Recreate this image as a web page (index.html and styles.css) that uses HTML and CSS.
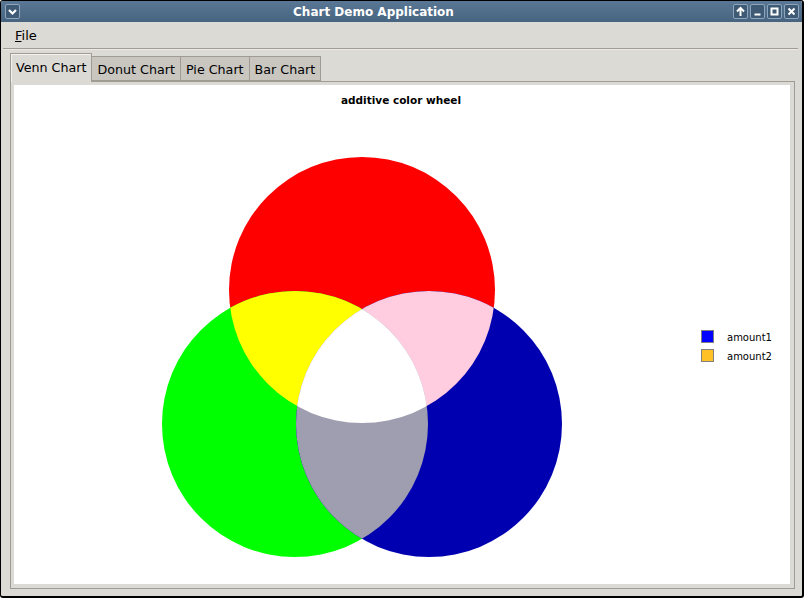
FILE: index.html
```html
<!DOCTYPE html>
<html>
<head>
<meta charset="utf-8">
<link rel="stylesheet" href="styles.css">
</head>
<body>
<div class="window">
  <div class="titlebar">
    <div class="tbtn menu-btn">
      <svg width="15" height="15" viewBox="0 0 15 15"><path d="M4 6 L7.5 9.5 L11 6" fill="none" stroke="#fff" stroke-width="2.2"/></svg>
    </div>
    <div class="title">Chart Demo Application</div>
    <div class="tbtns">
      <div class="tbtn"><svg width="15" height="15" viewBox="0 0 15 15"><path d="M7.5 4 V12 M4 7.5 L7.5 4 L11 7.5" fill="none" stroke="#fff" stroke-width="2"/></svg></div>
      <div class="tbtn"><svg width="15" height="15" viewBox="0 0 15 15"><path d="M4.5 10.5 H10.5" fill="none" stroke="#fff" stroke-width="2"/></svg></div>
      <div class="tbtn"><svg width="15" height="15" viewBox="0 0 15 15"><rect x="4.5" y="4.5" width="6" height="6" fill="none" stroke="#fff" stroke-width="2"/></svg></div>
      <div class="tbtn"><svg width="15" height="15" viewBox="0 0 15 15"><path d="M4.5 4.5 L10.5 10.5 M10.5 4.5 L4.5 10.5" fill="none" stroke="#fff" stroke-width="2"/></svg></div>
    </div>
  </div>
  <div class="menubar"><span class="menu-item"><span class="mn">F</span>ile</span></div>
  <div class="sep"></div>
  <div class="tabbar">
    <div class="tab active">Venn Chart</div>
    <div class="tab">Donut Chart</div>
    <div class="tab">Pie Chart</div>
    <div class="tab">Bar Chart</div>
  </div>
  <div class="pane">
    <div class="canvas">
      <svg class="chart" width="776" height="499" viewBox="0 0 776 499">
        <defs>
          <clipPath id="cr"><circle cx="348" cy="205" r="133"/></clipPath>
          <clipPath id="cg"><circle cx="281" cy="339" r="133"/></clipPath>
        </defs>
        <text class="ctitle" x="387" y="19" text-anchor="middle">additive color wheel</text>
        <circle cx="348" cy="205" r="133" fill="#ff0000"/>
        <circle cx="281" cy="339" r="133" fill="#00ff00"/>
        <circle cx="415" cy="339" r="133" fill="#0000b0"/>
        <circle cx="281" cy="339" r="133" fill="#ffff00" clip-path="url(#cr)"/>
        <circle cx="415" cy="339" r="133" fill="#ffcce0" clip-path="url(#cr)"/>
        <circle cx="415" cy="339" r="133" fill="#9e9eb0" clip-path="url(#cg)"/>
        <g clip-path="url(#cr)">
          <circle cx="415" cy="339" r="133" fill="#ffffff" clip-path="url(#cg)"/>
        </g>
        <rect x="687.5" y="245.5" width="12" height="12" fill="#0000ff" stroke="#808080"/>
        <rect x="687.5" y="264.5" width="12" height="12" fill="#ffc125" stroke="#808080"/>
        <text class="legend" x="713" y="255.5">amount1</text>
        <text class="legend" x="713" y="274.5">amount2</text>
      </svg>
    </div>
  </div>
</div>
</body>
</html>
```
FILE: styles.css
```css
html, body {
  margin: 0;
  padding: 0;
  background: #ffffff;
}
.window {
  width: 804px;
  height: 598px;
  box-sizing: border-box;
  border: 1px solid #000;
  border-right-width: 2px;
  border-bottom-width: 2px;
  border-radius: 3px;
  background: #dcdad5;
  overflow: hidden;
  font-family: "DejaVu Sans", sans-serif;
  display: flex;
  flex-direction: column;
}
.titlebar {
  height: 21px;
  flex: none;
  display: flex;
  align-items: center;
  padding: 0 3px 0 4px;
  background: linear-gradient(#5a7895, #46637f);
}
.title {
  flex: 1;
  text-align: center;
  color: #ffffff;
  font-weight: bold;
  font-size: 12px;
  padding-right: 6px;
}
.tbtns {
  display: flex;
  gap: 2px;
}
.tbtn {
  width: 15px;
  height: 15px;
  box-sizing: border-box;
  border: 1px solid #8ea6bd;
  border-radius: 2px;
  background: #3e5a75;
  display: flex;
  align-items: center;
  justify-content: center;
}
.tbtn svg {
  display: block;
  flex: none;
}
.menubar {
  height: 25px;
  box-sizing: border-box;
  padding-top: 2px;
  flex: none;
  display: flex;
  align-items: center;
  padding-left: 14px;
  font-size: 13px;
  color: #000;
}
.mn {
  text-decoration: underline;
}
.sep {
  height: 1px;
  flex: none;
  margin: 1px 4px 0 2px;
  background: #a09c94;
  border-bottom: 1px solid #ece9e4;
}
.tabbar {
  flex: none;
  display: flex;
  align-items: flex-end;
  height: 28px;
  margin-top: 3px;
  padding-left: 9px;
  position: relative;
  z-index: 1;
  font-size: 12.7px;
  color: #000;
}
.tab {
  height: 25px;
  box-sizing: border-box;
  padding: 1px 5px 0 5px;
  display: flex;
  align-items: center;
  background: #c9c6c0;
  border: 1px solid #a09c94;
  border-left: none;
  border-bottom: 1px solid #a09c94;
}
.tab.active {
  height: 29px;
  margin-bottom: -1px;
  background: #dcdad5;
  border-left: 1px solid #a09c94;
  border-bottom: none;
  box-shadow: inset 1px 1px 0 #f3f2ef;
  padding-top: 0;
  padding-bottom: 1px;
}
.pane {
  flex: none;
  height: 508px;
  box-sizing: border-box;
  margin: 0 7px 0 9px;
  border: 1px solid #a09c94;
  padding: 3px;
  background: #dcdad5;
}
.canvas {
  width: 776px;
  height: 499px;
  background: #ffffff;
}
.chart {
  display: block;
}
.ctitle {
  font-family: "DejaVu Sans", sans-serif;
  font-weight: bold;
  font-size: 10.5px;
  fill: #000;
}
.legend {
  font-family: "DejaVu Sans", sans-serif;
  font-size: 10px;
  fill: #000;
}
```
